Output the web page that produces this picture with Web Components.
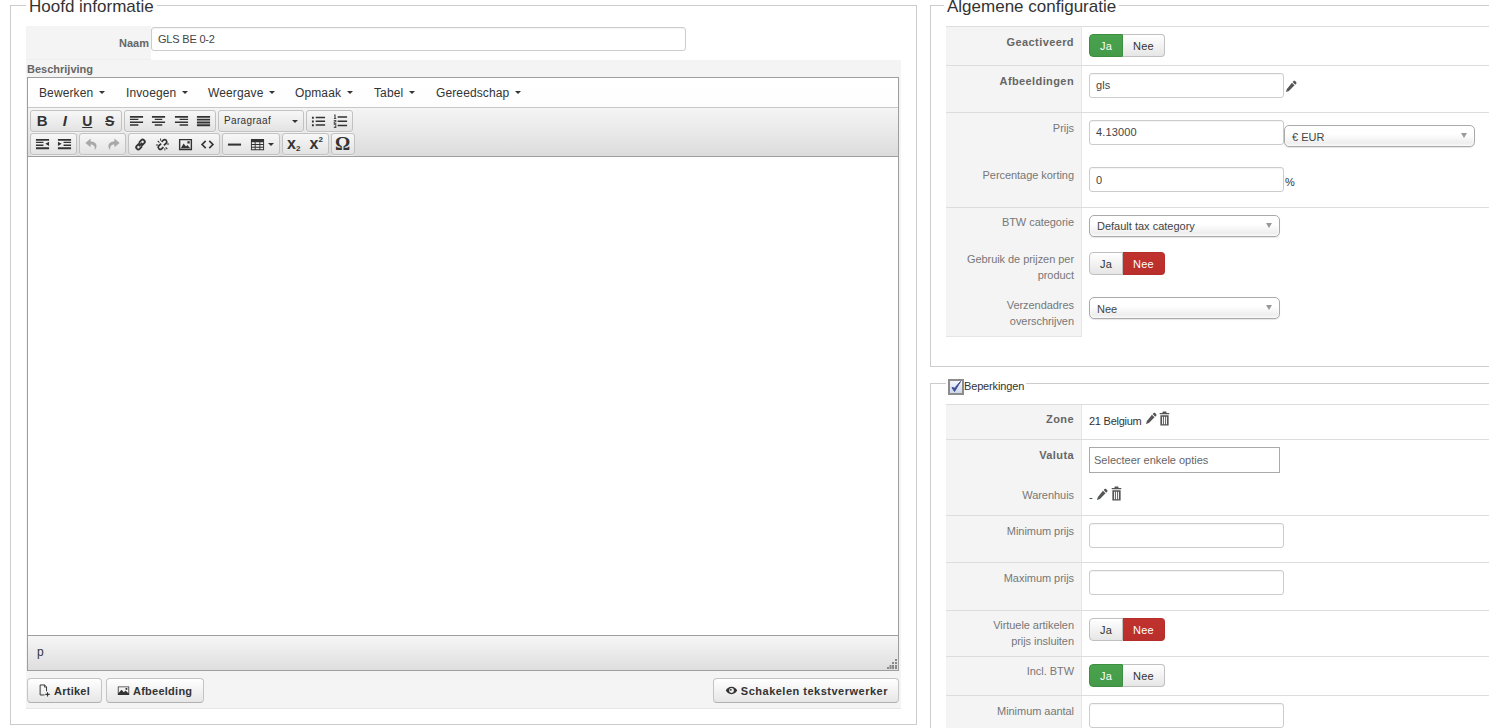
<!DOCTYPE html>
<html lang="nl"><head><meta charset="utf-8"><title>GLS BE 0-2</title>
<style>
html,body{margin:0;padding:0;height:728px;overflow:hidden;background:#fff}
body{font:11px/16px "Liberation Sans",Arial,sans-serif;color:#333}
</style></head>
<body>
<x-page>
  <x-fieldset slot="left" legend="Hoofd informatie" style="width:907px">
    <x-name-row label="Naam" value="GLS BE 0-2"></x-name-row>
    <x-description>
      <x-editor></x-editor>
      <x-btnbar>
        <x-btn icon="pageadd" style="padding-left:10px">Artikel</x-btn>
        <x-btn icon="picture" style="margin-left:4px;padding-left:10px">Afbeelding</x-btn>
        <x-btn icon="eye" slot="end" style="letter-spacing:.5px;padding:0 10px 0 11px">Schakelen tekstverwerker</x-btn>
      </x-btnbar>
    </x-description>
  </x-fieldset>
  <x-column slot="right">
    <x-fieldset legend="Algemene configuratie" style="--lm:-2px;height:373px;--pb:0px">
      <x-row label="Geactiveerd" strong line h="39"><x-toggle on="ja"></x-toggle></x-row>
      <x-row label="Afbeeldingen" strong line h="47"><x-text-input value="gls" w="195"></x-text-input><x-icon name="pencil" style="margin:7px 0 0 1px"></x-icon></x-row>
      <x-row label="Prijs" line h="47"><x-text-input value="4.13000" w="195"></x-text-input><x-select value="€ EUR" w="191" style="margin:5px 0 0 0"></x-select></x-row>
      <x-row label="Percentage korting" h="48"><x-text-input value="0" w="195" style="padding-top:1px"></x-text-input><span style="margin:7px 0 0 1px">%</span></x-row>
      <x-row label="BTW categorie" line h="37" pt="7"><x-select value="Default tax category" w="191" style="margin-top:1px;padding-top:0"></x-select></x-row>
      <x-row label="Gebruik de prijzen per product" h="45" pt="7"><x-toggle on="nee" style="margin-top:1px"></x-toggle></x-row>
      <x-row label="Verzendadres overschrijven" h="48" end><x-select value="Nee" w="191"></x-select></x-row>
    </x-fieldset>
    <x-fieldset checkbox legend="Beperkingen" style="--lm:0px;--lp:2px;margin-top:12px">
      <x-row label="Zone" strong line h="35" pt="7"><span style="margin-top:2px;letter-spacing:-.25px">21 Belgium</span><x-icon name="pencil" style="margin:1px 0 0 3px"></x-icon><x-icon name="trash" w="11" size="15" style="margin:0 0 0 0"></x-icon></x-row>
      <x-row label="Valuta" strong line h="45"><x-plain-input value="Selecteer enkele opties"></x-plain-input></x-row>
      <x-row label="Warenhuis" h="31" pt="3"><span style="margin-top:2px">-</span><x-icon name="pencil" style="margin:1px 0 0 3px"></x-icon><x-icon name="trash" w="11" size="15" style="margin:-1px 0 0 1px"></x-icon></x-row>
      <x-row label="Minimum prijs" line h="47"><x-text-input w="195"></x-text-input></x-row>
      <x-row label="Maximum prijs" line h="48"><x-text-input w="195"></x-text-input></x-row>
      <x-row label="Virtuele artikelen&#10;prijs insluiten" line h="46" pt="7"><x-toggle on="nee" style="margin-top:1px"></x-toggle></x-row>
      <x-row label="Incl. BTW" line h="39" pt="7"><x-toggle on="ja" style="margin-top:1px"></x-toggle></x-row>
      <x-row label="Minimum aantal" line h="47"><x-text-input w="195"></x-text-input></x-row>
    </x-fieldset>
  </x-column>
</x-page>

<script>
const ICONS={
 alignleft:'<path d="M1 2h14v2H1zM1 5h9v1.500H1zM1 8h14v1.500H1zM1 11h9v1.500H1z"/>',
 aligncenter:'<path d="M1 2h14v2H1zM4 5h8v1.500H4zM1 8h14v1.500H1zM4 11h8v1.500H4z"/>',
 alignright:'<path d="M1 2h14v2H1zM6 5h9v1.500H6zM1 8h14v1.500H1zM6 11h9v1.500H6z"/>',
 alignjustify:'<path d="M1 2h14v2H1zM1 5h14v2H1zM1 8h14v2H1zM1 11h14v2H1z"/>',
 bullist:'<path d="M1 3h2v2H1zM1 7h2v2H1zM1 11h2v2H1zM5 3h10v1.600H5zM5 7h10v1.600H5zM5 11h10v1.600H5z"/>',
 numlist:'<path d="M5 2.500h10v1.600H5zM5 7h10v1.600H5zM5 11.500h10v1.600H5zM1.500 0.500h1.200v4H3.500v.8H1v-.8h.6V1.500H1zM.8 6.500h2.700v2.200H1.800v.8h1.700v.8H.8V8h1.800v-.7H.8zM.8 11h2.700v4H.8v-.8h1.800v-.8H1.300v-.6h1.300v-1H.8z"/>',
 outdent:'<path d="M1 2h14v2H1zM1 5h8v1.500H1zM1 8h8v1.500H1zM1 11h14v2H1zM15 5v4.500l-4-2.200z"/>',
 indent:'<path d="M1 2h14v2H1zM7 5h8v1.500H7zM7 8h8v1.500H7zM1 11h14v2H1zM1 5v4.500l4-2.200z"/>',
 undo:'<path d="M7 1.500L1.500 6.500 7 11V8c3 0 5 1.500 4.500 6 3-3.500 3-9-4.500-9.500z"/>',
 redo:'<path d="M9 1.500l5.500 5L9 11V8C6 8 4 9.500 4.500 14c-3-3.500-3-9 4.500-9.500z"/>',
 link:'<path fill="none" stroke="currentColor" stroke-width="2" d="M7 6.500L4 9.500a2 2 0 0 0 0 2.800l.3.300a2 2 0 0 0 2.800 0L9.500 10M9 9.500l3-3a2 2 0 0 0 0-2.800l-.3-.3a2 2 0 0 0-2.800 0L6.500 6M6.300 9.800L9.800 6.300"/>',
 unlink:'<path fill="none" stroke="currentColor" stroke-width="1.800" d="M6.500 7L4 9.500a2 2 0 0 0 0 2.800l.3.300a2 2 0 0 0 2.800 0L9 10.700M9.500 9l2.500-2.500a2 2 0 0 0 0-2.800l-.3-.3a2 2 0 0 0-2.800 0L7 5.300"/><path d="M2.500 4.500l.8-.8 1.800 1.800-.8.800zM11 11.500l.8-.8 1.800 1.800-.8.800zM5.500 1.500h1v2.500h-1zM10 12h1v2.500h-1zM1 8h2.500v1H1zM12.500 7H15v1h-2.500z"/>',
 image:'<path fill-rule="evenodd" d="M1 2h14v12H1zM2.500 3.500v9h11v-9zM3 12l3-5 2.500 3 1.500-1.500 3 3.500zM10 4.500h2.500V7H10z"/>',
 code:'<path d="M5.500 3.500l1.200 1.200L3.400 8l3.300 3.300-1.200 1.200L1 8zM10.500 3.500L9.300 4.700 12.600 8l-3.300 3.300 1.200 1.200L15 8z"/>',
 hr:'<path d="M1 7h14v2.200H1z"/>',
 table:'<path fill-rule="evenodd" d="M1 2h14v12H1zM2 5.500v2h3v-2zM6 5.500v2h4v-2zM11 5.500v2h3v-2zM2 8.500v2h3v-2zM6 8.500v2h4v-2zM11 8.500v2h3v-2zM2 11.500v1.500h3v-1.500zM6 11.500v1.500h4v-1.500zM11 11.500v1.500h3v-1.500z"/>',
 pencil:'<path d="M9.800 1.200c.6-.6 1.500-.4 2 .1l.9.900c.5.500.7 1.400.1 2L11.700 5.300 8.700 2.300zM7.900 3.100l3 3L4.500 12.500 1 13.800l1.200-3.600z"/>',
 trash:'<path fill-rule="evenodd" d="M5.500 .5h5l.6 1.500H15v1.500H1V2h3.900zM2 4.500h12V15.500H2zM4.500 6v8h1.500V6zM7.250 6v8h1.500V6zM10 6v8h1.500V6z"/>',
 eye:'<path fill-rule="evenodd" d="M8 3.500c3.400 0 5.900 2.300 7 4.500-1.100 2.200-3.600 4.500-7 4.500S2.100 10.200 1 8c1.100-2.200 3.600-4.500 7-4.500zM8 5a3 3 0 1 0 0 6 3 3 0 0 0 0-6zM7.200 6a1.200 1.200 0 1 1 0 2.400 1.200 1.200 0 0 1 0-2.400z"/>',
 pageadd:'<path fill="none" stroke="currentColor" stroke-width="1.200" d="M10.500 9V3.500L8 1.200H2.600v12.300H8"/><path fill="none" stroke="currentColor" d="M8 1.200v2.600h2.500"/><path d="M11 10h1.400v2h2v1.400h-2v2H11v-2H9V12h2z"/>',
 picture:'<path fill-rule="evenodd" d="M1 3h14v10.500H1zM2 4v7l3.500-4 3 3 2-2 3.500 3.500V4zM10.500 4.800h2.200V7h-2.200z"/>'
};
const esc=s=>String(s==null?'':s).replace(/&/g,'&amp;').replace(/"/g,'&quot;').replace(/</g,'&lt;');
const def=(name,render)=>customElements.define(name,class extends HTMLElement{
  constructor(){super();this.attachShadow({mode:'open'})}
  connectedCallback(){this.shadowRoot.innerHTML=render(this)}
});
const iconSvg=(n,size=16,par='')=>`<svg width="${size}" height="${size}" viewBox="0 0 16 16" fill="currentColor" aria-hidden="true" ${par}>${ICONS[n]||''}</svg>`;

def('x-icon',el=>{const s=el.getAttribute('size')||14,w=el.getAttribute('w')||s;
 return `<style>:host{display:inline-block;width:${w}px;height:${s}px;color:#555;flex:none}svg{display:block;width:100%;height:100%}</style>${iconSvg(el.getAttribute('name'),16,'preserveAspectRatio="none"')}`});

def('x-page',()=>`<style>:host{display:flex;align-items:flex-start;gap:13px;margin:-6px 0 0 10px;width:1600px}
::slotted([slot=right]){flex:1;min-width:0}</style><slot name="left"></slot><slot name="right"></slot>`);

def('x-column',()=>`<style>:host{display:block}</style><slot></slot>`);

def('x-fieldset',el=>{
  const cb=el.hasAttribute('checkbox');
  return `<style>:host{display:block;box-sizing:border-box;font:11px/16px "Liberation Sans",sans-serif;color:#333}
  fieldset{margin:0;height:100%;box-sizing:border-box;border:1px solid #ccc;padding:10px 15px var(--pb,15px);min-width:0}
  legend{margin-left:var(--lm,0);padding:0 var(--lp,3px);color:#333;font-size:17px;line-height:26px;height:22px}
  legend.cb{font-size:11px;height:8px;line-height:16px;display:block}
  .w{display:flex;align-items:flex-start}
  .box{box-sizing:border-box;width:16px;height:16px;border:2px solid #8c8c8c;background:linear-gradient(#f4f6fb,#cdd6ea);display:block;flex:none}
  .box svg{display:block;width:12px;height:12px}
  .t{line-height:14px;letter-spacing:-.15px}
  fieldset.c{padding-top:17px}
  </style><fieldset class="${cb?'c':''}"><legend class="${cb?'cb':''}">${cb?`<span class="w"><span class="box"><svg viewBox="0 0 12 12"><path d="M2 6.500l2.500 4L10.500 0.500 4.700 7.200z" fill="#3b4e96" stroke="#3b4e96" stroke-width="1"/></svg></span><span class="t">${esc(el.getAttribute('legend'))}</span></span>`:esc(el.getAttribute('legend'))}</legend><div><slot></slot></div></fieldset>`;
});

def('x-name-row',el=>`<style>:host{display:flex;height:34px;font:11px/16px "Liberation Sans",sans-serif}
 .l{box-sizing:border-box;width:125px;background:#f4f4f4;text-align:right;padding:9px 2px 0 0;font-weight:bold;color:#666;border-bottom:1px solid #eee}
 .r{padding:1px 0 0 0}
 </style><div class="l">${esc(el.getAttribute('label'))}</div><div class="r"><x-text-input value="${esc(el.getAttribute('value'))}" w="535" style="letter-spacing:-.2px;height:24px"></x-text-input></div>`);

def('x-description',()=>`<style>:host{display:block;box-sizing:border-box;background:#f4f4f4;padding:1px 2px 5px 1px;border-bottom:1px solid #e6e6e6;font:11px/16px "Liberation Sans",sans-serif;height:649px}
 b{display:block;color:#666;height:16px;line-height:16px}</style><b>Beschrijving</b><slot></slot>`);

def('x-btnbar',()=>`<style>:host{display:flex;margin-top:7px;height:25px}.s{flex:1}</style><slot></slot><span class="s"></span><slot name="end"></slot>`);

def('x-btn',el=>`<style>:host{display:inline-flex;align-items:center;box-sizing:border-box;height:25px;padding:0 11px;border:1px solid #c4c4c4;border-bottom-color:#b0b0b0;border-radius:4px;background:linear-gradient(#fff,#e6e6e6);font:bold 11px/16px "Liberation Sans",sans-serif;color:#333;letter-spacing:.25px;white-space:nowrap;box-shadow:inset 0 1px 0 rgba(255,255,255,.6)}
 svg{width:13px;height:13px;margin-right:3px;display:block;flex:none;color:#333}</style>${iconSvg(el.getAttribute('icon'))}<slot></slot>`);

def('x-editor',()=>{
  const menus=[['Bewerken',87],['Invoegen',82],['Weergave',87],['Opmaak',79],['Tabel',62],['Gereedschap',100]];
  return `<style>:host{display:flex;flex-direction:column;box-sizing:border-box;width:872px;height:594px;border:1px solid #9e9e9e;font:12px/16px "Liberation Sans",sans-serif;color:#333}
  .menu{display:flex;height:30px;box-sizing:border-box;padding-left:11px;align-items:center;border-bottom:1px solid #c8c8c8;background:linear-gradient(#fff,#fdfdfd);flex:none;letter-spacing:.12px}
  .menu span{display:flex;align-items:center;white-space:nowrap}
  .menu i{display:block;width:0;height:0;border:3px solid transparent;border-top-color:#333;border-bottom:0;margin-left:6px}
  .tb{height:49px;flex:none;box-sizing:border-box;background:linear-gradient(#f5f5f5,#dcdcdc);border-bottom:1px solid #9e9e9e;padding:2px 0 0 2px}
  .r{display:flex;height:23px;gap:2px}
  .area{flex:1;background:#fff}
  .status{flex:none;box-sizing:border-box;height:35px;border-top:1px solid #9e9e9e;background:linear-gradient(#f6f6f6,#dedede);padding:8px 9px 0;position:relative}
  .grip{position:absolute;right:1px;bottom:1px;width:10px;height:10px}
  </style>
  <div class="menu">${menus.map(m=>`<span style="width:${m[1]}px">${m[0]}<i></i></span>`).join('')}</div>
  <div class="tb">
    <div class="r">
      <x-tbgroup><x-tb txt="B" f="b"></x-tb><x-tb txt="I" f="i"></x-tb><x-tb txt="U" f="u"></x-tb><x-tb txt="S" f="s"></x-tb></x-tbgroup>
      <x-tbgroup><x-tb i="alignleft"></x-tb><x-tb i="aligncenter"></x-tb><x-tb i="alignright"></x-tb><x-tb i="alignjustify"></x-tb></x-tbgroup>
      <x-tbgroup><x-tbselect></x-tbselect></x-tbgroup>
      <x-tbgroup><x-tb i="bullist"></x-tb><x-tb i="numlist"></x-tb></x-tbgroup>
    </div>
    <div class="r">
      <x-tbgroup><x-tb i="outdent"></x-tb><x-tb i="indent"></x-tb></x-tbgroup>
      <x-tbgroup><x-tb i="undo" dim></x-tb><x-tb i="redo" dim></x-tb></x-tbgroup>
      <x-tbgroup><x-tb i="link"></x-tb><x-tb i="unlink"></x-tb><x-tb i="image"></x-tb><x-tb i="code"></x-tb></x-tbgroup>
      <x-tbgroup><x-tb i="hr"></x-tb><x-tb i="table" caret></x-tb></x-tbgroup>
      <x-tbgroup><x-tb txt="x" sub="2"></x-tb><x-tb txt="x" sup="2"></x-tb></x-tbgroup>
      <x-tbgroup><x-tb txt="Ω" f="o"></x-tb></x-tbgroup>
    </div>
  </div>
  <div class="area"></div>
  <div class="status">p<svg class="grip" viewBox="0 0 10 10" fill="#8a8a8a"><path d="M8 0h2v2H8zM5 3h2v2H5zM8 3h2v2H8zM2.500 6h2v2h-2zM5 6h2v2H5zM8 6h2v2H8zM0 8h2v2H0zM2.500 8h2v2h-2zM5 8h2v2H5zM8 8h2v2H8z"/></svg></div>`;
});

def('x-tbgroup',()=>`<style>:host{display:flex;box-sizing:border-box;height:22px;border:1px solid #c2c2c2;border-radius:3px;background:linear-gradient(#f7f7f7,#e3e3e3);box-shadow:0 1px 0 rgba(255,255,255,.5)}</style><slot></slot>`);

def('x-tb',el=>{
  const f=el.getAttribute('f'),t=el.getAttribute('txt'),i=el.getAttribute('i');
  let inner='';
  if(t){
    const st={b:"font:bold 15px 'Liberation Sans',sans-serif",i:"font:italic bold 15px 'Liberation Sans',sans-serif",u:"font:bold 14px 'Liberation Sans',sans-serif;text-decoration:underline",s:"font:bold 14px 'Liberation Sans',sans-serif;text-decoration:line-through",o:"font:bold 19px 'Liberation Serif',serif"}[f]||"font:bold 16px 'Liberation Sans',sans-serif";
    inner=`<span style="${st};line-height:20px">${t}</span>`;
    if(el.hasAttribute('sub'))inner+=`<span style="font:bold 8px 'Liberation Sans',sans-serif;align-self:flex-end;line-height:9px;margin-bottom:1px">${el.getAttribute('sub')}</span>`;
    if(el.hasAttribute('sup'))inner+=`<span style="font:bold 8px 'Liberation Sans',sans-serif;align-self:flex-start;line-height:9px;margin-top:1px">${el.getAttribute('sup')}</span>`;
  } else {
    inner=`<span style="display:flex;width:15px;height:15px">${iconSvg(i,15)}</span>`;
  }
  const caret=el.hasAttribute('caret');
  const w=caret?33:(f==='o'?22:22.5);
  return `<style>:host{display:flex;align-items:center;justify-content:center;width:${w}px;height:20px;color:${el.hasAttribute('dim')?'#a8a8a8':'#333'};flex:none;box-sizing:border-box}
   i{display:block;border:3px solid transparent;border-top-color:#333;border-bottom:0;margin-left:3px}</style>${inner}${caret?'<i></i>':''}`;
});

def('x-tbselect',()=>`<style>:host{display:flex;align-items:center;width:84px;height:20px;padding-left:5px;box-sizing:border-box;font:10px/16px "Liberation Sans",sans-serif;color:#333;letter-spacing:.35px}
 i{display:block;border:3px solid transparent;border-top-color:#333;border-bottom:0;margin-left:auto;margin-right:5px}</style>Paragraaf<i></i>`);

def('x-row',el=>{
  const pt=el.getAttribute('pt')||8,h=el.getAttribute('h');
  const strong=el.hasAttribute('strong'),line=el.hasAttribute('line');
  return `<style>:host{display:grid;grid-template-columns:136px 1fr;box-sizing:border-box;height:${h}px;${line?'border-top:1px solid #ddd;':''}font:11px/16px "Liberation Sans",sans-serif;color:#333}
  .l{box-sizing:border-box;background:#f4f4f4;border-right:1px solid #e6e6e6;text-align:right;white-space:pre-line;padding:${pt-(line?1:0)}px 7px 0 18px;color:${strong?'#666':'#777'};font-weight:${strong?'bold':'normal'};letter-spacing:${strong?'.4px':'-.05px'};${el.hasAttribute('end')?'border-bottom:1px solid #e6e6e6;':''}}
  .c{display:flex;align-items:flex-start;padding:${pt-(line?1:0)}px 0 0 7px;min-width:0}
  </style><div class="l">${esc(el.getAttribute('label'))}</div><div class="c"><slot></slot></div>`;
});

def('x-text-input',el=>`<style>:host{display:block;flex:none;box-sizing:border-box;width:${el.getAttribute('w')||195}px;height:25px;border:1px solid #ccc;border-radius:3px;background:#fff;box-shadow:inset 0 1px 1px rgba(0,0,0,.05);font:11px/23px "Liberation Sans",sans-serif;color:#444;padding:0 6px;letter-spacing:.15px}</style>${esc(el.getAttribute('value'))}`);

def('x-plain-input',el=>`<style>:host{display:block;box-sizing:border-box;width:191px;height:26px;border:1px solid #aaa;background:#fff;font:11px/25px "Liberation Sans",sans-serif;color:#666;padding:0 4px}</style>${esc(el.getAttribute('value'))}`);

def('x-select',el=>`<style>:host{display:flex;align-items:center;flex:none;box-sizing:border-box;width:${el.getAttribute('w')||191}px;height:22px;border:1px solid #aaa;border-radius:5px;background:linear-gradient(#fff 0,#fff 40%,#eee 85%,#f6f6f6);box-shadow:0 0 3px #fff inset,0 1px 1px rgba(0,0,0,.1);font:11px/20px "Liberation Sans",sans-serif;color:#444;padding:1px 7px 0;white-space:nowrap}
 i{display:block;border:3.500px solid transparent;border-top:5px solid #999;border-bottom:0;margin:-2px 0 0 auto}</style>${esc(el.getAttribute('value'))}<i></i>`);

def('x-toggle',el=>{
  const on=el.getAttribute('on');
  return `<style>:host{display:inline-flex;height:23px;font:11px/22px "Liberation Sans",sans-serif}
  span{box-sizing:border-box;display:block;height:23px;text-align:center;border:1px solid #c0c0c0;background:linear-gradient(#fff,#e6e6e6);color:#333;letter-spacing:.2px}
  .ja{width:34px;border-radius:4px 0 0 4px}
  .nee{width:42px;border-radius:0 4px 4px 0;border-left:0}
  .green{background:linear-gradient(#4aa34e,#449a48);border-color:#3e8e42;color:#fff}
  .red{background:linear-gradient(#c0322e,#b92f2c);border-color:#b52d2a;color:#fff}
  </style><span class="ja ${on==='ja'?'green':''}">Ja</span><span class="nee ${on==='nee'?'red':''}">Nee</span>`;
});
</script>
</body></html>
